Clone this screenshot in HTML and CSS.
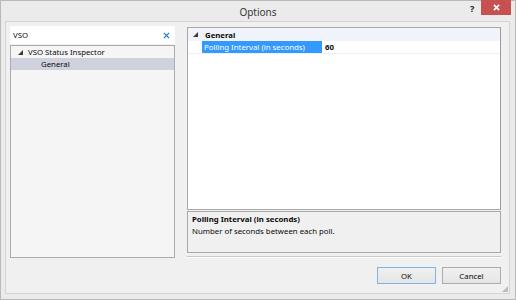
FILE: index.html
```html
<!DOCTYPE html>
<html lang="en">
<head>
    <meta charset="UTF-8">
    <title>Options</title>
    <link rel="stylesheet" href="styles.css">
</head>
<body>

<div class="window">
    <div class="titlebar">
        <span class="title">Options</span>
        <span class="help">?</span>
        <span class="close">
            <svg width="7" height="7" viewBox="0 0 8 8"><path d="M1 1L7 7M7 1L1 7" stroke="#fff" stroke-width="1.8"/></svg>
        </span>
    </div>

    <div class="client">
        <div class="main">
            <div class="left">
                <div class="search">
                    <span>VSO</span>
                    <svg class="clear" width="7" height="7" viewBox="0 0 8 8"><path d="M1 1L7 7M7 1L1 7" stroke="#2f7cc8" stroke-width="1.6"/></svg>
                </div>
                <div class="tree">
                    <div class="tree-row">
                        <svg class="expander" width="5" height="5" viewBox="0 0 5 5"><polygon points="5,0 5,5 0,5" fill="#3c3c3c"/></svg>
                        <span>VSO Status Inspector</span>
                    </div>
                    <div class="tree-row child selected">General</div>
                </div>
            </div>

            <div class="right">
                <div class="grid">
                    <div class="category">
                        <svg class="expander" width="5" height="5" viewBox="0 0 5 5"><polygon points="5,0 5,5 0,5" fill="#3c3c3c"/></svg>
                        <span>General</span>
                    </div>
                    <div class="prop">
                        <div class="prop-name">Polling Interval (in seconds)</div>
                        <div class="prop-value">60</div>
                    </div>
                </div>
                <div class="desc">
                    <div class="desc-title">Polling Interval (in seconds)</div>
                    <div class="desc-text">Number of seconds between each poll.</div>
                </div>
                <div class="separator"></div>
            </div>
        </div>

        <div class="buttons">
            <button class="default">OK</button>
            <button>Cancel</button>
        </div>
        <div class="grip"></div>
    </div>
</div>

</body>
</html>
```

FILE: styles.css
```css
* {
    margin: 0;
    padding: 0;
    box-sizing: border-box;
}

body {
    font-family: 'Noto Sans', sans-serif;
    font-size: 7.8px;
    color: #0a0a0a;
    background: #ebebeb;
}

.window {
    width: 516px;
    height: 300px;
    background: #ebebeb;
    border: 1px solid #b9b9b9;
    display: flex;
    flex-direction: column;
}

.titlebar {
    height: 20px;
    position: relative;
    display: flex;
    align-items: center;
    justify-content: center;
}

.title {
    font-size: 10px;
    color: #3a3a3a;
    margin-top: 1px;
}

.help {
    position: absolute;
    left: 469px;
    top: 1px;
    font-weight: 700;
    font-size: 9px;
    color: #222;
}

.close {
    position: absolute;
    left: 480px;
    top: -1px;
    width: 30px;
    height: 15px;
    background: #c75050;
    display: flex;
    align-items: center;
    justify-content: center;
}

.client {
    flex: 1;
    margin: 0 5px 5px 4px;
    background: #f0f0f0;
    border: 1px solid #d4d4d4;
    padding: 4px 8px 0 4px;
    display: flex;
    flex-direction: column;
    position: relative;
}

.main {
    display: flex;
    gap: 12px;
    height: 232px;
}

.left {
    width: 165px;
    display: flex;
    flex-direction: column;
}

.search {
    height: 18px;
    background: #fff;
    display: flex;
    align-items: center;
    justify-content: space-between;
    padding: 0 5px 0 3px;
}

.tree {
    flex: 1;
    margin-top: 1px;
    background: #f5f5f5;
    border: 1px solid #acacac;
}

.tree-row {
    height: 12px;
    line-height: 12px;
    display: flex;
    align-items: center;
    padding-left: 7px;
}

.tree-row .expander {
    margin-right: 5px;
}

.tree-row.child {
    padding-left: 30px;
}

.tree-row.selected {
    background: #cfd1dd;
}

.right {
    flex: 1;
    display: flex;
    flex-direction: column;
    padding-top: 1px;
}

.grid {
    height: 185px;
    background: #fff;
    border: 1px solid #a8a8a8;
    border-right-color: #9a9a9a;
}

.category {
    height: 13px;
    background: #f0f4fa;
    display: flex;
    align-items: center;
    font-weight: 700;
    padding-left: 5px;
}

.category .expander {
    margin-right: 7px;
}

.prop {
    height: 13px;
    display: flex;
    border-bottom: 1px solid #f0f0f0;
}

.prop-name {
    margin-left: 14px;
    width: 120px;
    background: #3399ff;
    color: #fff;
    padding-left: 2px;
    line-height: 13px;
}

.prop-value {
    font-weight: 700;
    padding-left: 3px;
    line-height: 13px;
}

.desc {
    height: 42px;
    margin-top: 1px;
    border: 1px solid #a8a8a8;
    background: #f0f0f0;
    padding: 1px 4px;
    line-height: 12px;
}

.desc-title {
    font-weight: 700;
}

.separator {
    margin-top: 3px;
    border-top: 1px solid #c8c8c8;
    border-bottom: 1px solid #fff;
}

.buttons {
    display: flex;
    justify-content: flex-end;
    gap: 6px;
    margin-top: 9px;
}

button {
    font-family: 'Noto Sans', sans-serif;
    font-size: 7.8px;
    color: #0a0a0a;
    width: 59px;
    height: 17px;
    line-height: 14px;
    border: 1px solid #acacac;
    background: linear-gradient(#f0f0f0, #e5e5e5);
}

button.default {
    border-color: #7eb4ea;
}

.grip {
    position: absolute;
    right: 1px;
    bottom: 1px;
    width: 6px;
    height: 6px;
    background: radial-gradient(circle, #b8b8b8 0.7px, transparent 0.8px) 0 0 / 2px 2px;
    clip-path: polygon(100% 0, 100% 100%, 0 100%);
}
```
